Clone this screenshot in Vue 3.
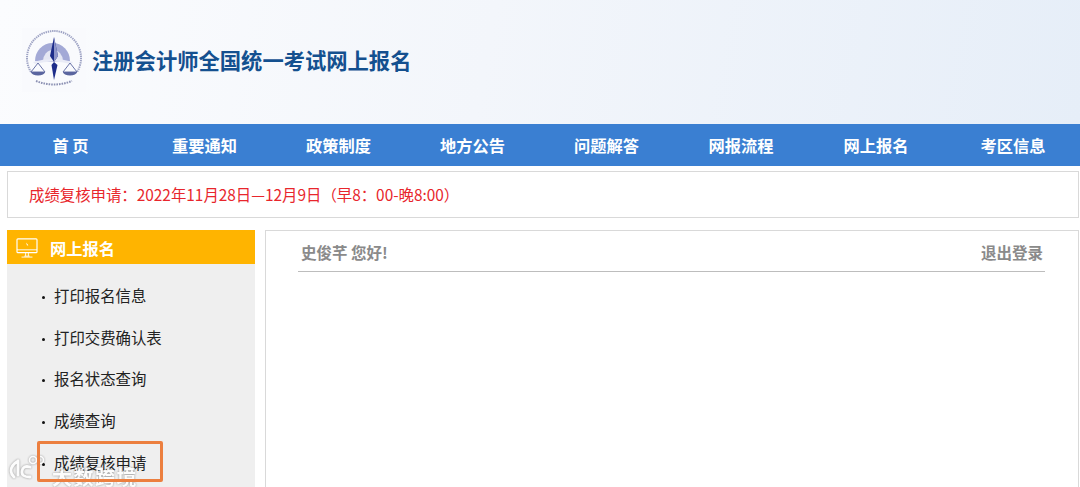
<script setup>
const navItems = ['首 页', '重要通知', '政策制度', '地方公告', '问题解答', '网报流程', '网上报名', '考区信息']
const menuItems = ['打印报名信息', '打印交费确认表', '报名状态查询', '成绩查询', '成绩复核申请']
</script>

<template>
  <div class="page">
    <header class="banner">
      <svg class="logo" viewBox="0 0 64 64" aria-hidden="true">
        <rect width="64" height="64" fill="#f9fafd" />
        <path d="M9 44A26 26 0 0 1 5 30A27 27 0 0 1 59 30A26 26 0 0 1 55 44" fill="none" stroke="#9ea3c4" stroke-width="2" stroke-dasharray="1.400 .8" />
        <path d="M13 33a17.500 18 0 0 1 35 0l-6 1H19z" fill="#a3a9d6" />
        <path d="M21 33a10 11 0 0 1 20 0z" fill="#e4e6f3" />
        <path d="M11 34q20-6 40 0l-2 2q-18-5-36 0z" fill="#e9ebf6" />
        <path d="M32 9l4 19-4 6-4-6z" fill="#1d2c8a" />
        <path d="M32 9l4 19-4 6z" fill="#8d94c8" />
        <path d="M32 34l3.500 3-3.500 15-2.500-15z" fill="#1d2c8a" />
        <path d="M16 35l-7 9h14zM48 35l-7 9h14z" fill="none" stroke="#5a659f" stroke-width="0.900" />
        <path d="M9 44a7 3.500 0 0 0 14 0zM41 44a7 3.500 0 0 0 14 0z" fill="#5a659f" />
        <path d="M14 53q18 7 36 0" fill="none" stroke="#8d92b4" stroke-width="2" stroke-dasharray="1.600 1" />
      </svg>
      <h1 class="site-title">注册会计师全国统一考试网上报名</h1>
    </header>

    <nav class="nav">
      <a v-for="item in navItems" :key="item" class="nav-item">{{ item }}</a>
    </nav>

    <div class="notice">成绩复核申请：2022年11月28日—12月9日（早8：00-晚8:00）</div>

    <div class="content">
      <aside class="sidebar">
        <div class="side-head">
          <svg class="monitor" viewBox="0 0 24 22" aria-hidden="true">
            <rect x="1" y="1" width="22" height="15" rx="1" fill="none" stroke="#fff" stroke-width="1.300" />
            <path d="M1 13h22M9 20h6M10.500 16v4M13.500 16v4M6 21h12" fill="none" stroke="#fff" stroke-width="1" />
            <path d="M11 5l2.500 3-1.500.3.500 1.700z" fill="#fff" />
          </svg>
          <span>网上报名</span>
        </div>
        <ul class="menu">
          <li v-for="item in menuItems" :key="item" class="menu-item">{{ item }}</li>
        </ul>
      </aside>

      <main class="main">
        <div class="user-bar">
          <span>史俊芊 您好!</span>
          <span>退出登录</span>
        </div>
      </main>
    </div>

    <div class="watermark">
      <svg class="wm-icon" viewBox="0 0 40 28" aria-hidden="true">
        <path d="M9 9Q2 13 2 19q0 3 3 6M9 9v14" fill="none" stroke="#fff" stroke-width="2.800" stroke-linecap="round" />
        <path d="M21 15q-7-2-8 4t8 6" fill="none" stroke="#fff" stroke-width="2.800" stroke-linecap="round" />
        <circle cx="24" cy="8" r="3.500" fill="none" stroke="#fff" stroke-width="1.600" />
        <circle cx="31" cy="8" r="3.500" fill="none" stroke="#fff" stroke-width="1.600" />
      </svg>
      <span class="wm-text">大数跨境</span>
    </div>

    <div class="highlight"></div>
  </div>
</template>

<style scoped>
.page {
  position: relative;
  width: 1080px;
  height: 487px;
  overflow: hidden;
  background: #fff;
  font-family: "Noto Sans CJK SC", "Liberation Sans", sans-serif;
}

.banner {
  height: 124px;
  box-sizing: border-box;
  padding: 28px 0 0 22px;
  display: flex;
  align-items: flex-start;
  gap: 6px;
  background: linear-gradient(100deg, #fbfcfe 0%, #f3f6fb 45%, #e6eef8 100%);
}

.logo {
  width: 64px;
  height: 64px;
  flex: none;
  filter: blur(0.4px);
}

.site-title {
  margin: 0;
  font-size: 21.300px;
  line-height: 64px;
  font-weight: 700;
  color: #14508f;
  white-space: nowrap;
}

.nav {
  height: 42px;
  box-sizing: border-box;
  padding-left: 3.500px;
  display: grid;
  grid-template-columns: repeat(5, 134px) 135px 135px 139px;
  align-items: center;
  background: #3a7fd2;
}

.nav-item {
  text-align: center;
  font-size: 16.250px;
  font-weight: 700;
  line-height: 42px;
  color: #fff;
  white-space: pre;
}

.notice {
  margin: 5px 1px 0 7px;
  height: 47px;
  box-sizing: border-box;
  padding-left: 21px;
  border: 1px solid #d9d9d9;
  font-size: 15.400px;
  line-height: 45px;
  color: #e8262c;
  white-space: nowrap;
}

.content {
  margin: 12px 1px 0 7px;
  display: flex;
  gap: 10px;
  height: 300px;
}

.sidebar {
  width: 248px;
  flex: none;
  background: #efefef;
}

.side-head {
  height: 34px;
  box-sizing: border-box;
  padding: 2px 0 0 9px;
  display: flex;
  align-items: center;
  gap: 12px;
  background: #ffb400;
  font-size: 16.250px;
  font-weight: 700;
  color: #fff;
}

.monitor {
  width: 22px;
  height: 20px;
  flex: none;
}

.menu {
  list-style: none;
  margin: 0;
  padding: 11px 0 0 33px;
}

.menu-item {
  position: relative;
  padding-left: 14px;
  height: 41.700px;
  font-size: 15.400px;
  line-height: 41.700px;
  color: #222;
  white-space: nowrap;
}

.menu-item::before {
  content: "";
  position: absolute;
  left: 2px;
  top: 21px;
  width: 3px;
  height: 3px;
  border-radius: 50%;
  background: #111;
}

.main {
  flex: 1;
  box-sizing: border-box;
  padding: 0 33px 0 32px;
  border: 1px solid #d9d9d9;
}

.user-bar {
  height: 41px;
  box-sizing: border-box;
  padding: 2px 2px 0 3px;
  display: flex;
  justify-content: space-between;
  align-items: center;
  border-bottom: 1px solid #bdbdbd;
  font-size: 15.500px;
  font-weight: 700;
  color: #8a8a8a;
}

.highlight {
  position: absolute;
  left: 37px;
  top: 441px;
  width: 126px;
  height: 41px;
  box-sizing: border-box;
  border: 3px solid #ec7f3f;
  border-radius: 2px;
}

.watermark {
  position: absolute;
  left: 9px;
  top: 452px;
  display: flex;
  align-items: flex-start;
  opacity: 0.85;
  filter: drop-shadow(0 0 1px rgba(0, 0, 0, 0.45));
}

.wm-icon {
  width: 40px;
  height: 28px;
  flex: none;
}

.wm-text {
  margin: 15px 0 0 3px;
  font-size: 20px;
  letter-spacing: 1.500px;
  line-height: 20px;
  font-weight: 700;
  color: #fff;
  white-space: nowrap;
}
</style>
